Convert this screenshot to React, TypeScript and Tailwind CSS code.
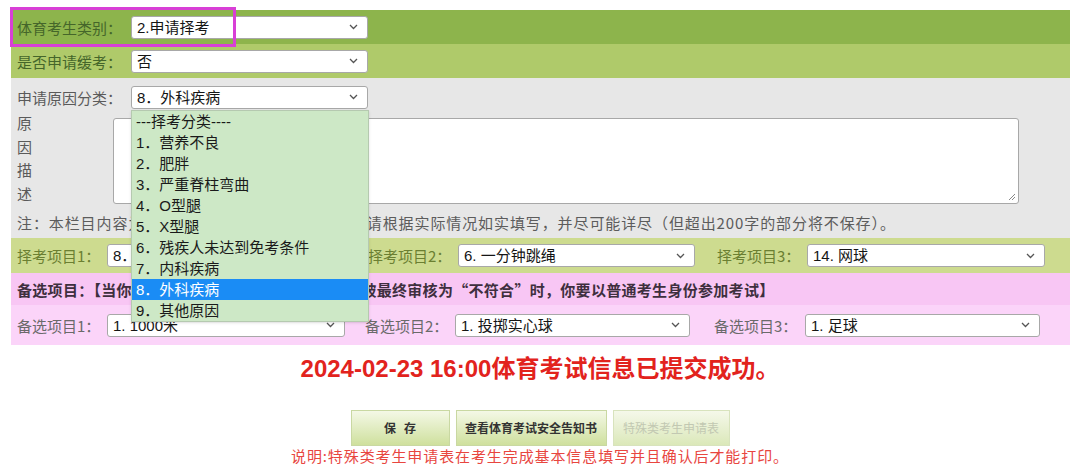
import React from "react";

const SANS = '"Liberation Sans", "Noto Sans CJK SC", sans-serif';
const CJK = '"Noto Sans CJK SC", "Liberation Sans", sans-serif';

function Chevron() {
  return (
    <svg width="9" height="6" viewBox="0 0 9 6" className="absolute right-[9px] top-1/2 -translate-y-1/2">
      <path d="M1 1 L4.5 4.5 L8 1" fill="none" stroke="#555" strokeWidth="1.3" />
    </svg>
  );
}

function Sel({ value, cls }: { value: string; cls: string }) {
  return (
    <div
      className={`relative flex items-center shrink-0 bg-white border border-[#a8a8a8] rounded-[3px] h-[23px] pl-[5px] text-[15px] text-[#151515] leading-none ${cls}`}
      style={{ fontFamily: SANS }}
    >
      <span className="whitespace-nowrap">{value}</span>
      <Chevron />
    </div>
  );
}

function Label({ text, cls }: { text: string; cls: string }) {
  return (
    <span className={`shrink-0 whitespace-nowrap text-[15px] leading-none ${cls}`} style={{ fontFamily: CJK }}>
      {text}
    </span>
  );
}

const options = [
  "---择考分类----",
  "1．营养不良",
  "2．肥胖",
  "3．严重脊柱弯曲",
  "4．O型腿",
  "5．X型腿",
  "6．残疾人未达到免考条件",
  "7．内科疾病",
  "8．外科疾病",
  "9．其他原因",
];

export default function App() {
  return (
    <div className="w-[1080px] h-[471px] bg-white overflow-hidden" style={{ fontFamily: CJK }}>
      <div className="relative ml-[11px] mt-[10px] w-[1059px]">
        {/* Row 1 */}
        <div className="flex items-center h-[34px] bg-[#8db44c] pl-[6px]">
          <Label text="体育考生类别：" cls="w-[114px] text-[#45662a]" />
          <Sel value="2.申请择考" cls="w-[237px]" />
        </div>
        {/* Row 2 */}
        <div className="flex items-center h-[34px] bg-[#afca6a] pl-[6px]">
          <Label text="是否申请缓考：" cls="w-[114px] text-[#45662a]" />
          <Sel value="否" cls="w-[237px]" />
        </div>
        {/* Row 3 */}
        <div className="bg-[#e7e7e7] pl-[6px] pt-[8px] pb-[8px]">
          <div className="flex items-center h-[22px]">
            <Label text="申请原因分类：" cls="w-[114px] text-[#5a5a5a]" />
            <div className="relative">
              <Sel value="8．外科疾病" cls="w-[237px]" />
              <div className="absolute left-0 top-[24px] z-10 w-[238px] bg-[#cde8c6] border border-[#b5c9b0] shadow-sm" style={{ fontFamily: SANS }}>
                {options.map((o, i) => (
                  <div
                    key={o}
                    className={`h-[21.1px] flex items-center pl-[4px] text-[15px] leading-none ${
                      i === 8 ? "bg-[#1a8cf5] text-white" : "text-[#1a1a1a]"
                    }`}
                  >
                    {o}
                  </div>
                ))}
              </div>
            </div>
          </div>
          <div className="flex mt-[10px]">
            <div className="flex flex-col w-[96px] text-[15px] text-[#5a5a5a] leading-none gap-[8.5px] -mt-[3px]">
              {"原因描述".split("").map((c) => (
                <span key={c}>{c}</span>
              ))}
            </div>
            <div className="relative w-[906px] h-[86px] bg-white border border-[#a8a8a8] rounded-[3px]">
              <svg width="8" height="8" viewBox="0 0 8 8" className="absolute right-[2px] bottom-[2px]">
                <path d="M7 1 L1 7 M7 4 L4 7" stroke="#888" strokeWidth="1" />
              </svg>
            </div>
          </div>
          <div className="mt-[11px] text-[15px] tracking-[0.9px] text-[#5c5c5c] leading-none whitespace-nowrap">
            注：本栏目内容为申请择考的原因描述，必填项，请根据实际情况如实填写，并尽可能详尽（但超出200字的部分将不保存）。
          </div>
        </div>
        {/* Row 4 */}
        <div className="flex items-center h-[35px] bg-[#cddb8f] pl-[6px]">
          <Label text="择考项目1：" cls="w-[90px] text-[#6b7f32]" />
          <Sel value="8．立定跳远" cls="w-[243px]" />
          <Label text="择考项目2：" cls="ml-[18px] w-[90px] text-[#6b7f32]" />
          <Sel value="6. 一分钟跳绳" cls="w-[237px]" />
          <Label text="择考项目3：" cls="ml-[22px] w-[90px] text-[#6b7f32]" />
          <Sel value="14. 网球" cls="w-[238px]" />
        </div>
        {/* Row 5 */}
        <div className="flex items-center h-[32px] bg-[#f8c6f4] pl-[6px] text-[15px] tracking-[0.3px] font-bold text-[#3e2f3e] whitespace-nowrap leading-none">
          备选项目：【当你的择考申请未获通过或择考的项目被最终审核为“不符合”时，你要以普通考生身份参加考试】
        </div>
        {/* Row 6 */}
        <div className="flex items-center h-[40px] bg-[#fbd4f9] pl-[6px]">
          <Label text="备选项目1：" cls="w-[90px] text-[#6a6a6a]" />
          <Sel value="1. 1000米" cls="w-[238px]" />
          <Label text="备选项目2：" cls="ml-[20px] w-[90px] text-[#6a6a6a]" />
          <Sel value="1. 投掷实心球" cls="w-[235px]" />
          <Label text="备选项目3：" cls="ml-[24px] w-[91px] text-[#6a6a6a]" />
          <Sel value="1. 足球" cls="w-[235px]" />
        </div>
        {/* Magenta highlight */}
        <div className="absolute left-[-1px] top-[-3px] w-[226px] h-[40px] border-[3px] border-[#d83fd6] pointer-events-none" />
      </div>

      <div
        className="mt-[12px] text-center text-[24px] font-bold text-[#e2231d] leading-none"
        style={{ fontFamily: SANS }}
      >
        2024-02-23 16:00体育考试信息已提交成功。
      </div>

      <div className="flex justify-center gap-[6px] mt-[29px]">
        <div className="w-[99px] h-[36px] flex items-center justify-center border border-[#c9d8a2] bg-gradient-to-b from-[#f4f8e6] to-[#cfe09d] text-[12px] font-bold text-[#333] whitespace-pre">
          保{"   "}存
        </div>
        <div className="w-[151px] h-[36px] flex items-center justify-center border border-[#c9d8a2] bg-gradient-to-b from-[#f4f8e6] to-[#cfe09d] text-[12px] font-bold text-[#333]">
          查看体育考试安全告知书
        </div>
        <div className="w-[117px] h-[36px] flex items-center justify-center border border-[#d8e3bd] bg-gradient-to-b from-[#f5f8ea] to-[#dbe8b9] text-[12px] text-[#c2c8b2]">
          特殊类考生申请表
        </div>
      </div>
      <div className="mt-[2px] text-center text-[15px] tracking-[0.9px] text-[#e8463f] leading-none">
        说明:特殊类考生申请表在考生完成基本信息填写并且确认后才能打印。
      </div>
    </div>
  );
}
